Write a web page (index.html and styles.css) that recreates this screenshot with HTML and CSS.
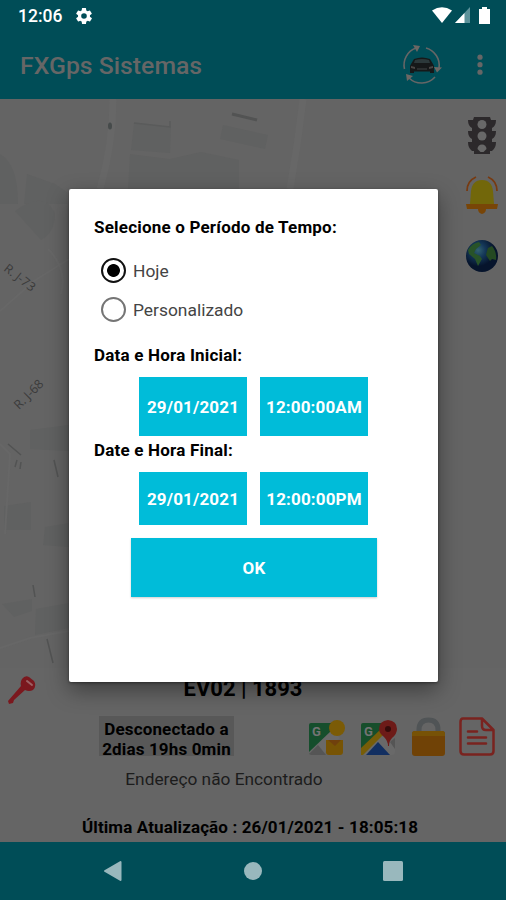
FILE: index.html
```html
<!DOCTYPE html>
<html lang="pt-BR">
<head>
  <meta charset="UTF-8" />
  <title>FXGps Sistemas</title>
  <link rel="stylesheet" href="styles.css">
</head>
<body>
  <div class="screen">

    <header class="status-bar">
      <span class="clock">12:06</span>
      <svg class="gear" width="16" height="16" viewBox="2 2 20 20"><path fill="#fff" fill-rule="evenodd" d="M19.4 13a7.500 7.500 0 0 0 0-2l2.100-1.600a.5.5 0 0 0 .1-.7l-2-3.400a.5.5 0 0 0-.6-.2l-2.500 1a7 7 0 0 0-1.700-1L14.500 2.400A.5.500 0 0 0 14 2h-4a.5.500 0 0 0-.5.400L9.100 5.100a7 7 0 0 0-1.700 1l-2.400-1a.5.500 0 0 0-.6.200l-2 3.400a.5.500 0 0 0 .1.700L4.600 11a7.500 7.500 0 0 0 0 2l-2.100 1.600a.5.500 0 0 0-.1.700l2 3.400c.1.200.4.300.6.200l2.400-1a7 7 0 0 0 1.700 1l.4 2.700c0 .2.200.4.500.4h4c.3 0 .5-.2.500-.4l.4-2.700a7 7 0 0 0 1.700-1l2.500 1c.2.100.5 0 .6-.2l2-3.400a.5.500 0 0 0-.1-.7zM12 15.500a3.500 3.500 0 1 1 0-7 3.500 3.500 0 0 1 0 7z"/></svg>
      <div class="signals">
        <svg width="20" height="16" viewBox="0 0 20 16"><path fill="#fff" d="M0 3.500Q10-3 20 3.500L10 16z"/></svg>
        <svg width="15" height="16" viewBox="0 0 15 16"><path fill="#5c929a" d="M15 0v16H0z"/><path fill="#fff" d="M9.500 5.900V16H0z"/></svg>
        <svg class="battery" width="11" height="17" viewBox="0 0 11 17"><path fill="#fff" d="M3 0h5v2h3v15H0V2h3z"/></svg>
      </div>
    </header>

    <div class="app-bar">
      <h1>FXGps Sistemas</h1>
      <svg class="car" width="42" height="42" viewBox="0 0 42 42">
        <g fill="none" stroke="#666" stroke-width="1.600">
          <path d="M3.500 25A18 18 0 0 1 15 4"/>
          <path d="M25 4A18 18 0 0 1 38 24"/>
          <path d="M34 33A18 18 0 0 1 8 34"/>
        </g>
        <path fill="#6c6764" d="M12 1l7 1-3 6zM33 23l8 .5-5 5zM5 30l7 2-6 5z"/>
        <path fill="#161819" d="M13 15q8-3 16 0l3 5 1 2v7h-4v-1.500H13V29H9v-7l1-2z"/>
        <path fill="#2c383a" d="M14 16q7-2 14 0l1 3H13z"/>
        <path fill="#4a4645" d="M10 22l4 1v2l-4-1zM32 22l-4 1v2l4-1z"/>
        <path fill="#2b2e2f" d="M16 24h10v2H16z"/>
      </svg>
      <svg class="more" width="6" height="22" viewBox="0 0 6 22"><g fill="#666"><circle cx="3" cy="3.200" r="2.600"/><circle cx="3" cy="10.700" r="2.600"/><circle cx="3" cy="18.200" r="2.600"/></g></svg>
    </div>

    <main class="map">
      <svg class="streets" width="506" height="569" viewBox="0 0 506 569">
        <g fill="#606161">
          <path d="M134 24l37 4-1 26-39-3zM130 55l40 5 31-7 38 8v30H128z"/>
          <path d="M223 26l45 10-3 14-45-10z"/>
          <path d="M0 55q18 10 18 50H0zM27 75l28 10 12 8v12H24z"/>
          <path d="M15 112q30-22 40 3 0 18-14 26z"/>
          <path d="M30 331l39-5v26l-39-2zM45 428l24-4v24l-26-2zM36 510l33-6v25l-34 7zM4 407l27-4v28H4z"/>
          <path d="M2 505l30-5v12l-18 6z"/>
        </g>
        <g fill="none" stroke="#676767">
          <path stroke-width="7" d="M113 0q0 45-13 90M303 0q-5 45-13 90"/>
          <path stroke-width="2" d="M48 150q20 20 13 45M0 212l34-30 35-22M0 549l30-10 39-7M0 345l10 10-5 80"/>
        </g>
        <g fill="none" stroke="#525353" stroke-width="1.500">
          <path stroke-width="3" d="M232 15l25 6"/>
          <path stroke="#5a5b5b" d="M134 24l36 4v-6"/>
          <path d="M8 345l13 11M17 361l-2 7M21 363l-1 7M54 361l4 17M33 486l2 12M47 540l6 24"/>
        </g>
        <ellipse cx="110" cy="27" rx="2" ry="3.500" fill="#464b4b"/>
        <g class="street-name">
          <text transform="translate(3 171) rotate(38)">R. J-73</text>
          <text transform="translate(19 311) rotate(-45)">R. J-68</text>
        </g>
      </svg>

      <div class="map-tools">
        <svg width="28" height="38" viewBox="0 0 28 38">
          <path fill="#2c292b" d="M6 0h16l1 3h5q0 6-4 8v3h4q0 6-4 8v3h4q0 6-4 9h-2v3H6v-3H4q-4-3-4-9h4v-3q-4-2-4-8h4v-3Q0 9 0 3h5z"/>
          <g fill="#686868"><circle cx="14" cy="7.500" r="4.500"/><circle cx="14" cy="19" r="4.500"/><path d="M9.500 32a4.500 4.500 0 1 1 9 0l-3 3h-3z"/></g>
        </svg>
        <svg width="32" height="38" viewBox="0 0 32 38">
          <g fill="none" stroke="#783a10" stroke-width="1.800"><path d="M1 15Q1 5 10 1M22 1q9 4 9 14"/></g>
          <path fill="#72670a" d="M16 4c7 0 10 4 11 11l1 13H4l1-13C6 8 9 4 16 4z"/>
          <path fill="#784507" d="M0 28h32l-1 5H20q0 4-4 5-4-1-4-5H1z"/>
        </svg>
        <svg class="globe" width="32" height="32" viewBox="0 0 32 32">
          <defs><radialGradient id="sea" cx="38%" cy="32%"><stop offset="0" stop-color="#326270"/><stop offset=".45" stop-color="#143758"/><stop offset="1" stop-color="#06142c"/></radialGradient></defs>
          <circle cx="16" cy="16" r="16" fill="url(#sea)"/>
          <path fill="#285329" d="M2 10Q6 3 13 2l2 3-5 4-2 4 6 3 2 3-4 7-3-7-6-5z"/>
          <path fill="#244922" d="M22 8l4-2q5 6 4 14l-4-1-2 2-4-6 1-4z"/>
        </svg>
      </div>
    </main>

    <section class="vehicle">
      <h2>EV02 | 1893</h2>
      <svg class="key" width="28" height="29" viewBox="0 0 28 29">
        <path fill="#7b181e" d="M14 4q3-4 7-2l5 4q3 5-1 9-4 2-8 0L6 25l-1 3-4 1-1-3 13-15q-1-4 1-7z"/>
        <path fill="none" stroke="#9b6264" stroke-width="2" stroke-linecap="round" d="M19 6l5 4"/>
      </svg>
      <div class="vehicle-row">
        <div class="offline">Desconectado a<br>2dias 19hs 0min</div>
        <div class="actions">
          <svg width="38" height="36" viewBox="0 0 38 36">
            <path fill="#154e2c" d="M3 3h24v8L1 34V5q0-2 2-2z"/>
            <path fill="#696969" d="M1 32L24 10l8 8-18 17H3q-2 0-2-3z"/>
            <path fill="#555" d="M1 34l9-9 8 10H3z"/>
            <text class="g" x="4" y="16">G</text>
            <path fill="#775405" d="M18 20h17v12q0 3-3 3H21q-3 0-3-3z"/>
            <path fill="#70400d" d="M20 20h13l-6 6z"/>
            <circle cx="29" cy="8" r="8" fill="#7b5b06"/>
          </svg>
          <svg width="38" height="36" viewBox="0 0 38 36">
            <path fill="#164e2b" d="M3 3h28v12L1 34V5q0-2 2-2z"/>
            <path fill="#775d08" d="M1 28L21 9l5 5L4 35H1z"/>
            <path fill="#696969" d="M3 35l21-21 11 12v6q0 3-3 3z"/>
            <path fill="#122f61" d="M6 35l12-13 12 13z"/>
            <path fill="#555" d="M30 22l5-4v11z"/>
            <text class="g" x="4" y="16">G</text>
            <path fill="#6d1b18" d="M28 0q9 1 9 9 0 5-5 9-3 3-3 8h-1q0-5-4-9-5-4-5-8 0-8 9-9z"/>
            <circle cx="28" cy="9" r="3" fill="#350b0a"/>
          </svg>
          <svg width="33" height="39" viewBox="0 0 33 39">
            <path fill="none" stroke="#505456" stroke-width="5" d="M7 17v-4q0-10 9.500-10T26 13v4"/>
            <rect y="14" width="33" height="25" rx="3" fill="#704206"/>
            <path fill="#775206" d="M3 14h27q3 0 3 3v2H0v-2q0-3 3-3z"/>
          </svg>
          <svg width="36" height="39" viewBox="0 0 36 39">
            <g fill="none" stroke="#79231f" stroke-width="2.500" stroke-linejoin="round">
              <path d="M4 1.500h19L34.500 13v21q0 3.500-3.500 3.500H5Q1.500 37.500 1.500 34V5Q1.500 1.500 4 1.500zM23 2v7q0 4 4 4h7"/>
              <path stroke-linecap="round" d="M9 14.500h9M9 20.500h18M9 26.500h18"/>
            </g>
          </svg>
        </div>
      </div>
      <p class="address">Endereço não Encontrado</p>
      <p class="updated">Última Atualização : 26/01/2021 - 18:05:18</p>
    </section>

    <nav class="nav-bar">
      <svg width="20" height="22" viewBox="0 0 20 22"><path fill="#99b8bd" stroke="#99b8bd" stroke-width="2" stroke-linejoin="round" d="M2 11L17.500 2v18z"/></svg>
      <svg width="18" height="18" viewBox="0 0 18 18"><circle cx="9" cy="9" r="9" fill="#99b8bd"/></svg>
      <svg width="20" height="20" viewBox="0 0 20 20"><rect width="20" height="20" rx="1.500" fill="#99b8bd"/></svg>
    </nav>

    <form class="dialog">
      <h3>Selecione o Período de Tempo:</h3>
      <label class="option"><input type="radio" name="periodo" checked>Hoje</label>
      <label class="option"><input type="radio" name="periodo">Personalizado</label>
      <h3 class="start">Data e Hora Inicial:</h3>
      <div class="pair">
        <button type="button">29/01/2021</button>
        <button type="button">12:00:00AM</button>
      </div>
      <h3 class="end">Date e Hora Final:</h3>
      <div class="pair short">
        <button type="button">29/01/2021</button>
        <button type="button">12:00:00PM</button>
      </div>
      <button type="button" class="ok">OK</button>
    </form>

  </div>
</body>
</html>
```
FILE: styles.css
```css
* { box-sizing: border-box; }
body { margin: 0; font-family: Roboto, sans-serif; color: #000; }
h1, h2, h3, p { margin: 0; }
svg { display: block; flex: none; }

.screen { position: relative; display: flex; flex-direction: column; width: 506px; height: 900px; overflow: hidden; background: #656565; }

.status-bar { display: flex; align-items: center; height: 32px; padding: 0 16px 0 18px; background: #004d57; color: #fff; }
.clock { font-size: 17.5px; font-weight: 500; width: 58px; }
.signals { display: flex; align-items: center; gap: 3px; margin: -2px 0 0 auto; }
.battery { margin-left: 6px; }

.app-bar { display: flex; align-items: center; height: 67px; padding: 0 23px 0 20px; background: #004d57; }
.app-bar h1 { flex: 1; font-size: 24.8px; font-weight: 500; color: #666; }
.car { margin: -2px 34px 0 0; }
.more { margin-top: -2px; }

.map { position: relative; height: 569px; background: #646464; }
.street-name { font-family: "Open Sans", sans-serif; font-size: 12.5px; fill: #3b3b3b; }
.map-tools { position: absolute; top: 18px; right: 8px; display: flex; flex-direction: column; align-items: center; gap: 21px; }
.globe { margin-top: 5px; }

.vehicle { position: relative; height: 174px; background: #656565; }
.vehicle h2 { padding: 8px 20px 0 0; font-size: 22px; line-height: 25px; font-weight: 700; text-align: center; }
.key { position: absolute; left: 8px; top: 7px; }
.vehicle-row { display: flex; justify-content: space-between; padding: 15px 11px 0 99px; }
.offline { width: 135px; height: 40px; background: #585858; font-size: 17px; letter-spacing: .15px; line-height: 20px; font-weight: 700; text-align: center; white-space: nowrap; padding-top: 3px; }
.actions { display: flex; align-items: flex-end; gap: 14px; }
.g { font-family: Roboto, sans-serif; font-size: 13px; font-weight: 700; fill: #737373; }
.address { margin-top: 12px; padding-right: 58px; font-size: 17.3px; line-height: 22px; text-align: center; color: #1c1c1c; }
.updated { margin-top: 26px; font-size: 17px; letter-spacing: .12px; line-height: 22px; font-weight: 700; text-align: center; padding-right: 6px; }

.nav-bar { display: flex; align-items: center; justify-content: space-between; height: 58px; padding: 0 103px; background: #004d57; }

.dialog { position: absolute; left: 69px; top: 189px; width: 369px; height: 493px; padding: 27px 25px; background: #fff; border-radius: 2px; box-shadow: 0 8px 22px rgba(0, 0, 0, .4), 0 1px 3px rgba(0, 0, 0, .4); }
.dialog h3 { font-size: 17px; letter-spacing: .2px; line-height: 22px; font-weight: 700; }
.option { display: flex; align-items: center; gap: 7px; height: 39px; padding-left: 7px; font-size: 17.4px; color: #444; }
.dialog h3 + .option { margin-top: 13px; }
.option input { appearance: none; width: 25px; height: 25px; margin: 0; border: 2.5px solid #757575; border-radius: 50%; }
.option input:checked { border-color: #111; background: radial-gradient(circle, #000 6px, transparent 6.8px); }
.dialog .start { margin-top: 15px; }
.pair { display: flex; gap: 13px; margin: 11px 0 0 45px; }
.pair button { width: 108px; height: 59px; }
.dialog .end { margin-top: 3px; }
.short button { height: 53px; }
.dialog button { display: block; padding: 0; border: 0; background: #00bcd9; color: #fff; font: 700 17px Roboto, sans-serif; letter-spacing: .15px; white-space: nowrap; }
.dialog .ok { width: 246px; height: 59px; margin: 13px 0 0 37px; box-shadow: 0 1px 2px rgba(0, 0, 0, .2); }
```
